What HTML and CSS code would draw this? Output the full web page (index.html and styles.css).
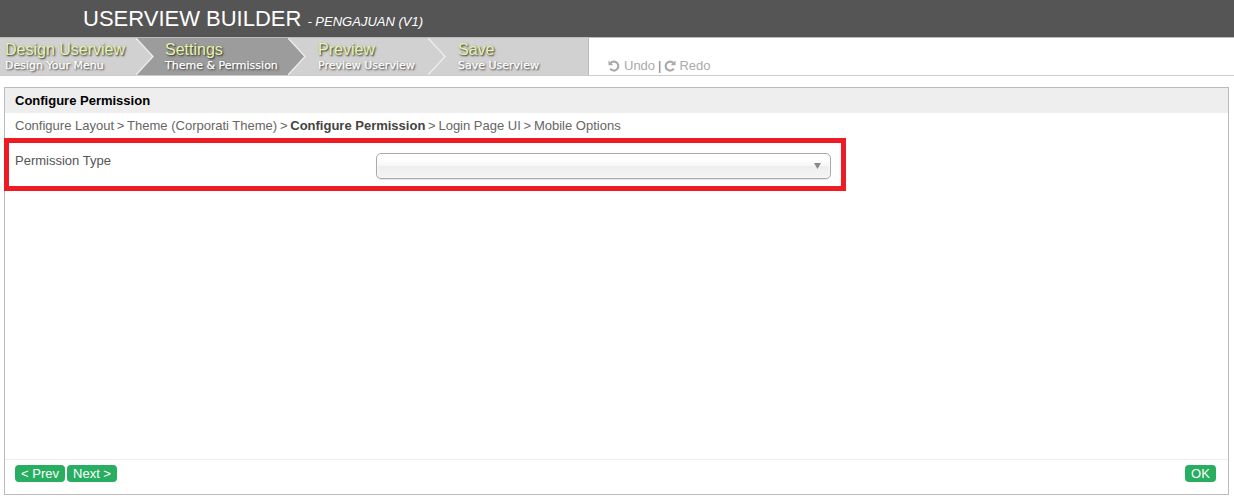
FILE: index.html
```html
<!DOCTYPE html>
<html lang="en">
<head>
<meta charset="utf-8">
<title>Userview Builder</title>
<link rel="stylesheet" href="styles.css">
</head>
<body>
<header class="header"><h1 class="title">USERVIEW BUILDER</h1><i class="subtitle">- PENGAJUAN (V1)</i></header>
<nav class="nav">
  <ul class="steps">
    <li class="step step-design"><span class="step-name">Design Userview</span><span class="step-desc">Design Your Menu</span>
      <svg class="arrow" viewBox="0 0 20 37"><path class="fill-active" d="M0 0H20V37H0z"/><path class="fill-light" d="M0 0L17 18.5L0 37z"/><path class="edge" d="M0 0L17 18.5L0 37"/></svg></li>
    <li class="step step-settings active"><span class="step-name">Settings</span><span class="step-desc">Theme &amp; Permission</span>
      <svg class="arrow" viewBox="0 0 20 37"><path class="fill-light" d="M0 0H20V37H0z"/><path class="fill-active" d="M0 0L17 18.5L0 37z"/><path class="edge" d="M0 0L17 18.5L0 37"/></svg></li>
    <li class="step step-preview"><span class="step-name">Preview</span><span class="step-desc">Preview Userview</span>
      <svg class="arrow" viewBox="0 0 20 37"><path class="edge" d="M0 0L17 18.5L0 37"/></svg></li>
    <li class="step step-save"><span class="step-name">Save</span><span class="step-desc">Save Userview</span></li>
  </ul>
  <div class="history">
    <svg class="icon" viewBox="0 0 12 12"><path class="stroke" d="M2.6 2.9A4.5 4.5 0 1 1 2.2 8.7"/><path class="solid" d="M.5.5V5.3H5.3z"/></svg><span class="undo">Undo</span><span class="bar">|</span><svg class="icon" viewBox="0 0 12 12"><path class="stroke" d="M9.4 2.9A4.5 4.5 0 1 0 9.8 8.7"/><path class="solid" d="M11.5.5V5.3H6.7z"/></svg><span class="redo">Redo</span>
  </div>
</nav>
<main class="panel">
  <h2 class="panel-title">Configure Permission</h2>
  <div class="crumbs"><span>Configure Layout</span><span>&gt;</span><span>Theme (Corporati Theme)</span><span>&gt;</span><b>Configure Permission</b><span>&gt;</span><span>Login Page UI</span><span>&gt;</span><span>Mobile Options</span></div>
  <section class="field">
    <label class="label">Permission Type</label>
    <div class="select"><span class="caret"></span></div>
  </section>
  <footer class="footer"><div class="pager"><button class="btn prev">&lt; Prev</button><button class="btn next">Next &gt;</button></div><button class="btn ok">OK</button></footer>
</main>
</body>
</html>
```
FILE: styles.css
```css
* { box-sizing: border-box; }
body { margin: 0; height: 500px; overflow: hidden; background: #fff; color: #555; font: 13px/16px "Liberation Sans", Arial, sans-serif; display: flex; flex-direction: column; }
.header { height: 37px; flex: none; background: #555; color: #fff; padding: 6px 0 0 83px; display: flex; align-items: baseline; gap: 6px; }
.title { margin: 0; font-size: 22px; line-height: 25px; font-weight: 400; white-space: nowrap; }
.subtitle { font-size: 13px; white-space: nowrap; }
.nav { height: 39px; flex: none; border-top: 1px solid #bbb; border-bottom: 1px solid #ccc; display: flex; }
.steps { display: flex; margin: 0; padding: 0; list-style: none; width: 589px; background: #d1d1d1; border-right: 1px solid #bbb; }
.step { display: flex; flex-direction: column; position: relative; padding-top: 3px; white-space: nowrap; text-shadow: 1px 1px 2px #222; }
.step-design { width: 136px; padding-left: 5px; }
.step-settings { width: 152px; padding-left: 29px; }
.step-preview { width: 140px; padding-left: 30px; }
.step-save { flex: 1; padding-left: 30px; }
.active { background: #9c9c9c; }
.step-name { font-size: 16px; line-height: 18px; color: #e5f5a9; }
.step-desc { font: 11px/14px "DejaVu Sans", sans-serif; color: #fff; -webkit-text-stroke: .25px #fff; }
.arrow { position: absolute; left: 100%; top: 0; width: 20px; height: 37px; z-index: 1; }
.fill-active { fill: #9c9c9c; }
.fill-light { fill: #d1d1d1; }
.edge { fill: none; stroke: #eee; stroke-width: 1.3; }
.history { display: flex; align-items: center; height: 16px; margin: 20px 0 0 19px; color: #aaa; }
.icon { width: 12px; height: 12px; flex: none; }
.stroke { fill: none; stroke: #aaa; stroke-width: 2.2; }
.solid { fill: #aaa; }
.undo { margin-left: 4px; }
.redo { margin-left: 3px; }
.bar { margin: 0 3px; color: #777; }
.panel { margin: 11px 5px 5px 4px; flex: 1; border: 1px solid #bbb; display: flex; flex-direction: column; }
.panel-title { margin: 0; height: 25px; padding: 5px 10px; background: #eee; color: #000; font-size: 13px; line-height: 16px; font-weight: 700; }
.crumbs { height: 25px; padding: 5px 10px; display: flex; gap: 2.75px; color: #666; white-space: nowrap; }
.crumbs b { color: #444; }
.field { height: 53px; width: 842px; margin-left: -1px; border: 5px solid #ed1c24; display: flex; padding: 10px 10px 0 6px; }
.label { width: 361px; line-height: 15px; }
.select { width: 455px; height: 26px; border: 1px solid #aaa; border-radius: 5px; background: linear-gradient(#fff 20%, #f6f6f6 50%, #eee 52%, #f4f4f4); box-shadow: inset 0 0 3px #fff, 0 1px 1px rgba(0,0,0,.1); display: flex; justify-content: flex-end; padding: 9px 9px 0 0; }
.caret { width: 7px; height: 6px; background: #888; clip-path: polygon(0 0, 100% 0, 50% 100%); }
.footer { margin-top: auto; height: 35px; border-top: 1px solid #eee; display: flex; justify-content: space-between; padding: 5px 12px 0 10px; }
.pager { display: flex; gap: 2px; }
.btn { height: 17px; border: 0; border-radius: 4px; padding: 0; background: #27ae60; color: #fff; font: 13px/17px "Liberation Sans", Arial, sans-serif; }
.prev, .next { width: 50px; }
.ok { width: 31px; }
```
